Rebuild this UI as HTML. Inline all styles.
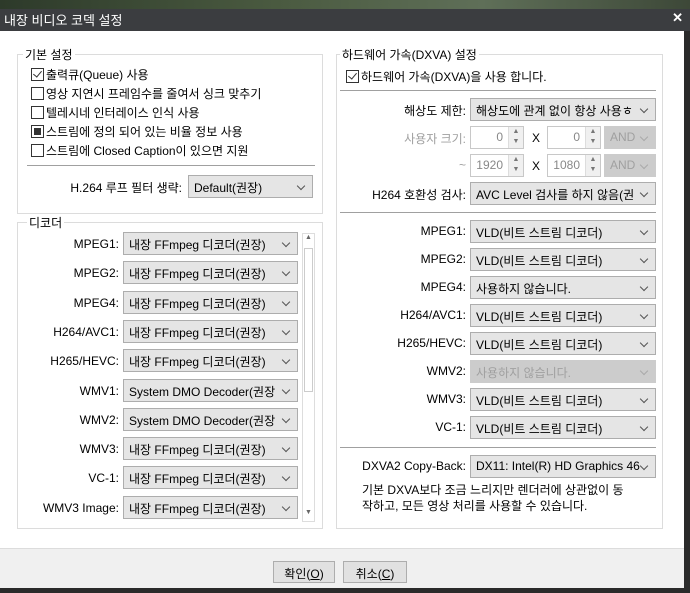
<!DOCTYPE html>
<html><head><meta charset="utf-8"><style>
*{box-sizing:border-box;margin:0;padding:0}
body{width:690px;height:593px;overflow:hidden;background:#1f2620;font-family:"Liberation Sans","Noto Sans CJK KR",sans-serif;font-size:12px;color:#000;position:relative}
.a{position:absolute}
.top{left:0;top:0;width:690px;height:9px;background:linear-gradient(90deg,#2d3a2a,#4a5a40 40%,#5f6f58 70%,#3d4838)}
.title{left:0;top:9px;width:690px;height:22px;background:#3b3d40;color:#fff;font-size:13px;padding:1px 0 0 4px}
.x{right:7px;top:10px;color:#fff;font-size:13px;font-weight:bold}
.dlg{left:0;top:31px;width:684px;height:557px;background:#fff}
.bot{left:0;top:548px;width:684px;height:40px;background:#f0f0f0;border-top:1px solid #dcdcdc}
.rb{left:684px;top:31px;width:6px;height:562px;background:#2a2a2a}
.bb{left:0;top:588px;width:690px;height:5px;background:#2a2a2a}
.grp{border:1px solid #dcdcdc}
.lg{background:#fff;padding:0 2px;color:#000;white-space:nowrap}
.cb{width:13px;height:13px;border:1px solid #333;background:#fff;display:inline-block;vertical-align:-2px;margin-right:2px;position:relative}
.row{white-space:nowrap;height:19px}
.combo{background:#e5e5e5;border:1px solid #adadad;height:23px;padding:3px 0 0 5px;white-space:nowrap;overflow:hidden}
.combo:after{content:"";position:absolute;right:8px;top:7px;width:5px;height:5px;border-right:1px solid #555;border-bottom:1px solid #555;transform:rotate(45deg)}
.dis{color:#a0a0a0;background:#ccc;border-color:#ccc}
.dis:after{border-color:#aaa}
.lbl{text-align:right;white-space:nowrap}
.sep{height:1px;background:#a0a0a0}
.spin{background:#fff;border:1px solid #c8c8c8;height:23px;text-align:right;padding:3px 20px 0 0;color:#888}
.spin i{position:absolute;right:0;top:0;width:15px;height:21px;background:#f0f0f0;border-left:1px solid #ddd;font-style:normal;font-size:7px;line-height:10px;text-align:center;color:#777}
.btn{background:#e1e1e1;border:1px solid #adadad;height:22px;text-align:center;padding-top:3px}
</style></head><body>
<div class="a top"></div>
<div class="a title">내장 비디오 코덱 설정</div>
<div class="a x">✕</div>
<div class="a dlg"></div>
<div class="a bot"></div>
<div class="a rb"></div><div class="a bb"></div>

<div class="a grp" style="left:17px;top:54px;width:306px;height:160px"></div>
<div class="a lg" style="left:23px;top:46px">기본 설정</div>
<div class="a" style="left:31px;top:66px;line-height:19.3px">
<div class="row"><span class="cb"><span class="a" style="left:3px;top:0;width:5px;height:8px;border-right:1.5px solid #333;border-bottom:1.5px solid #333;transform:rotate(40deg)"></span></span>출력큐(Queue) 사용</div>
<div class="row"><span class="cb"></span>영상 지연시 프레임수를 줄여서 싱크 맞추기</div>
<div class="row"><span class="cb"></span>텔레시네 인터레이스 인식 사용</div>
<div class="row"><span class="cb"><span class="a" style="left:2px;top:2px;width:7px;height:7px;background:#333"></span></span>스트림에 정의 되어 있는 비율 정보 사용</div>
<div class="row"><span class="cb"></span>스트림에 Closed Caption이 있으면 지원</div>
</div>
<div class="a sep" style="left:27px;top:165px;width:288px"></div>
<div class="a lbl" style="left:30px;top:179px;width:152px">H.264 루프 필터 생략:</div>
<div class="a combo" style="left:188px;top:175px;width:125px">Default(권장)</div>

<div class="a grp" style="left:17px;top:222px;width:306px;height:307px"></div>
<div class="a lg" style="left:27px;top:214px">디코더</div>
<div class="a" style="left:302px;top:233px;width:13px;height:289px;border:1px solid #ddd;background:#fff">
<div class="a" style="left:0;top:0;width:11px;height:12px;font-size:7px;text-align:center;color:#666">▲</div>
<div class="a" style="left:1px;top:14px;width:9px;height:144px;border:1px solid #ccc;background:#fff"></div>
<div class="a" style="left:0;bottom:0;width:11px;height:12px;font-size:7px;text-align:center;color:#666">▼</div>
</div>

<div class="a grp" style="left:336px;top:54px;width:327px;height:475px"></div>
<div class="a lg" style="left:340px;top:46px">하드웨어 가속(DXVA) 설정</div>
<div class="a row" style="left:346px;top:68px"><span class="cb"><span class="a" style="left:3px;top:0;width:5px;height:8px;border-right:1.5px solid #333;border-bottom:1.5px solid #333;transform:rotate(40deg)"></span></span>하드웨어 가속(DXVA)을 사용 합니다.</div>
<div class="a sep" style="left:340px;top:90px;width:316px"></div>
<div class="a lbl" style="left:340px;top:102px;width:126px">해상도 제한:</div>
<div class="a combo" style="left:470px;top:98px;width:186px">해상도에 관계 없이 항상 사용ㅎ</div>
<div class="a lbl" style="left:340px;top:130px;width:126px;color:#a0a0a0">사용자 크기:</div>
<div class="a spin" style="left:470px;top:126px;width:54px">0<i>▲<br>▼</i></div>
<div class="a" style="left:532px;top:131px">X</div>
<div class="a spin" style="left:547px;top:126px;width:54px">0<i>▲<br>▼</i></div>
<div class="a combo dis" style="left:604px;top:126px;width:52px">AND</div>
<div class="a lbl" style="left:340px;top:158px;width:126px;color:#a0a0a0">~</div>
<div class="a spin" style="left:470px;top:154px;width:54px">1920<i>▲<br>▼</i></div>
<div class="a" style="left:532px;top:159px">X</div>
<div class="a spin" style="left:547px;top:154px;width:54px">1080<i>▲<br>▼</i></div>
<div class="a combo dis" style="left:604px;top:154px;width:52px">AND</div>
<div class="a lbl" style="left:340px;top:186px;width:126px">H264 호환성 검사:</div>
<div class="a combo" style="left:470px;top:182px;width:186px">AVC Level 검사를 하지 않음(권</div>
<div class="a sep" style="left:340px;top:212px;width:316px"></div>
<div class="a sep" style="left:340px;top:447px;width:316px"></div>
<div class="a lbl" style="left:340px;top:459px;width:126px">DXVA2 Copy-Back:</div>
<div class="a combo" style="left:470px;top:455px;width:186px">DX11: Intel(R) HD Graphics 46</div>
<div class="a" style="left:362px;top:482px;width:300px;line-height:16px;white-space:nowrap">기본 DXVA보다 조금 느리지만 렌더러에 상관없이 동<br>작하고, 모든 영상 처리를 사용할 수 있습니다.</div>

<div class="a btn" style="left:273px;top:561px;width:62px">확인(<u>O</u>)</div>
<div class="a btn" style="left:343px;top:561px;width:64px">취소(<u>C</u>)</div>

<div id="L"></div>
<script>
var l=[["MPEG1:","내장 FFmpeg 디코더(권장)"],["MPEG2:","내장 FFmpeg 디코더(권장)"],["MPEG4:","내장 FFmpeg 디코더(권장)"],["H264/AVC1:","내장 FFmpeg 디코더(권장)"],["H265/HEVC:","내장 FFmpeg 디코더(권장)"],["WMV1:","System DMO Decoder(권장"],["WMV2:","System DMO Decoder(권장"],["WMV3:","내장 FFmpeg 디코더(권장)"],["VC-1:","내장 FFmpeg 디코더(권장)"],["WMV3 Image:","내장 FFmpeg 디코더(권장)"]];
var r=[["MPEG1:","VLD(비트 스트림 디코더)"],["MPEG2:","VLD(비트 스트림 디코더)"],["MPEG4:","사용하지 않습니다."],["H264/AVC1:","VLD(비트 스트림 디코더)"],["H265/HEVC:","VLD(비트 스트림 디코더)"],["WMV2:","사용하지 않습니다.",1],["WMV3:","VLD(비트 스트림 디코더)"],["VC-1:","VLD(비트 스트림 디코더)"]];
var h="";
l.forEach(function(e,i){var y=232+i*29.3;h+='<div class="a lbl" style="left:20px;top:'+(y+5)+'px;width:99px">'+e[0]+'</div><div class="a combo" style="left:123px;top:'+y+'px;width:175px">'+e[1]+'</div>';});
r.forEach(function(e,i){var y=220+i*28;h+='<div class="a lbl" style="left:340px;top:'+(y+4)+'px;width:126px">'+e[0]+'</div><div class="a combo'+(e[2]?' dis':'')+'" style="left:470px;top:'+y+'px;width:186px">'+e[1]+'</div>';});
document.getElementById("L").innerHTML=h;
</script>
</body></html>
